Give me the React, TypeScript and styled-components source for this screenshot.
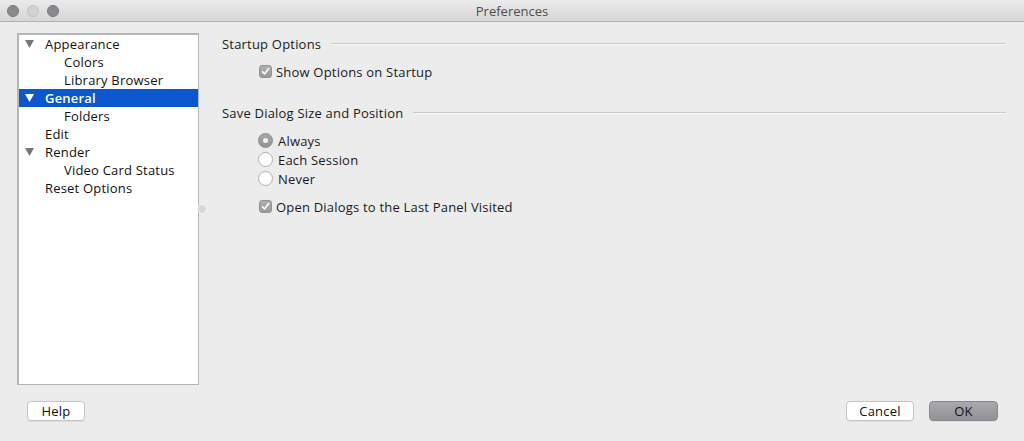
import React from "react";
import styled, { createGlobalStyle } from "styled-components";

const Global = createGlobalStyle`
  html, body { margin: 0; padding: 0; background: #ececec; }
  body { font-family: "Open Sans", "Liberation Sans", sans-serif; }
`;

const Window = styled.div`
  width: 1024px;
  height: 441px;
  background: #ececec;
  display: flex;
  flex-direction: column;
  overflow: hidden;
  font-size: 13px;
  letter-spacing: 0.2px;
  color: #1a1a1a;
`;

const TitleBar = styled.div`
  height: 21px;
  flex: none;
  border-bottom: 1px solid #b3b3b3;
  background: linear-gradient(#ebebeb, #d5d5d5);
  display: flex;
  align-items: center;
  position: relative;
`;

const Lights = styled.div`
  display: flex;
  gap: 8px;
  padding-left: 7px;
`;

const Light = styled.span<{ $dim?: boolean }>`
  width: 12px;
  height: 12px;
  border-radius: 50%;
  box-sizing: border-box;
  background: ${(p) => (p.$dim ? "#d2d2d2" : "#8b8b8f")};
  border: 1px solid ${(p) => (p.$dim ? "#c2c2c2" : "#77777b")};
`;

const Title = styled.div`
  position: absolute;
  left: 0;
  right: 0;
  text-align: center;
  color: #4d4d4d;
  font-size: 13px;
  letter-spacing: 0;
  pointer-events: none;
`;

const Body = styled.div`
  flex: none;
  display: flex;
  padding: 11px 18px 0 17px;
`;

const TreeBox = styled.div`
  width: 182px;
  height: 352px;
  box-sizing: border-box;
  background: #fff;
  border: 1px solid #b5b5b5;
  border-left-width: 2px;
  border-top-width: 2px;
  flex: none;
`;

const Row = styled.div<{ $level: number; $selected?: boolean }>`
  height: 18px;
  display: flex;
  align-items: center;
  padding-left: ${(p) => (p.$level === 0 ? 6 : 45)}px;
  background: ${(p) => (p.$selected ? "#0b57d0" : "transparent")};
  color: ${(p) => (p.$selected ? "#fff" : "#111")};
  font-weight: ${(p) => (p.$selected ? 600 : 400)};
  white-space: nowrap;
`;

const Twisty = styled.span`
  width: 20px;
  display: flex;
  align-items: center;
`;

const Splitter = styled.div`
  width: 23px;
  flex: none;
  display: flex;
  align-items: center;
  justify-content: center;
`;

const Dot = styled.span`
  width: 8px;
  height: 8px;
  border-radius: 50%;
  background: #d8d8d8;
  border: 1px solid #f6f6f6;
  margin-left: -17px;
`;

const Panel = styled.div`
  flex: 1;
  display: flex;
  flex-direction: column;
  padding-top: 2px;
`;

const Section = styled.div`
  display: flex;
  align-items: center;
  height: 18px;
  gap: 10px;
`;

const Rule = styled.div`
  flex: 1;
  height: 1px;
  background: #c8c8c8;
  border-bottom: 1px solid #f8f8f8;
  margin-top: -1px;
`;

const Options = styled.div<{ $top: number; $bottom?: number }>`
  display: flex;
  flex-direction: column;
  padding-left: 36px;
  margin-top: ${(p) => p.$top}px;
  margin-bottom: ${(p) => p.$bottom ?? 0}px;
`;

const OptRow = styled.label<{ $h?: number; $end?: boolean }>`
  display: flex;
  align-items: ${(p) => (p.$end ? "flex-end" : "center")};
  height: ${(p) => p.$h ?? 19}px;
  gap: 4px;
`;

const CheckBox = styled.span`
  width: 13px;
  height: 13px;
  margin-left: 1px;
  border-radius: 3px;
  box-sizing: border-box;
  background: linear-gradient(#b0b0b0, #9a9a9a);
  border: 1px solid #929292;
  display: flex;
  align-items: center;
  justify-content: center;
  margin-bottom: ${"3px"};
`;

const Radio = styled.span<{ $on?: boolean }>`
  width: 15px;
  height: 15px;
  border-radius: 50%;
  box-sizing: border-box;
  background: ${(p) => (p.$on ? "linear-gradient(#a8a8a8, #939393)" : "#fff")};
  border: 1px solid ${(p) => (p.$on ? "#8a8a8a" : "#b0b0b0")};
  display: flex;
  align-items: center;
  justify-content: center;
  margin-right: 1px;
`;

const RadioDot = styled.span`
  width: 5px;
  height: 5px;
  border-radius: 50%;
  background: #f2f2f2;
`;

const Footer = styled.div`
  flex: 1;
  display: flex;
  align-items: flex-start;
  padding: 16px 26px 0 27px;
  box-sizing: border-box;
`;

const Spacer = styled.div`
  flex: 1;
`;

const Button = styled.button<{ $default?: boolean; $w: number }>`
  width: ${(p) => p.$w}px;
  height: 20px;
  box-sizing: border-box;
  border-radius: 4px;
  font-family: inherit;
  font-size: 13px;
  letter-spacing: 0.2px;
  color: #111;
  padding: 0;
  line-height: 18px;
  background: ${(p) => (p.$default ? "linear-gradient(#a9a9ad, #929296)" : "#fff")};
  border: 1px solid ${(p) => (p.$default ? "#88888c" : "#c4c4c4")};
  box-shadow: 0 1px 0 rgba(0, 0, 0, 0.06);
  margin-left: ${(p) => (p.$default ? 15 : 0)}px;
`;

const Tri = ({ color }: { color: string }) => (
  <svg width="9" height="8" viewBox="0 0 9 8">
    <polygon points="0,0 9,0 4.5,8" fill={color} />
  </svg>
);

const Check = () => (
  <svg width="9" height="9" viewBox="0 0 9 9">
    <polyline points="1.5,4.8 3.6,7 7.6,1.5" fill="none" stroke="#fff" strokeWidth="1.6" strokeLinecap="round" strokeLinejoin="round" />
  </svg>
);

type Item = { label: string; level: number; open?: boolean; selected?: boolean };

const items: Item[] = [
  { label: "Appearance", level: 0, open: true },
  { label: "Colors", level: 1 },
  { label: "Library Browser", level: 1 },
  { label: "General", level: 0, open: true, selected: true },
  { label: "Folders", level: 1 },
  { label: "Edit", level: 0 },
  { label: "Render", level: 0, open: true },
  { label: "Video Card Status", level: 1 },
  { label: "Reset Options", level: 0 },
];

export default function App() {
  return (
    <Window>
      <Global />
      <TitleBar>
        <Lights>
          <Light />
          <Light $dim />
          <Light />
        </Lights>
        <Title>Preferences</Title>
      </TitleBar>
      <Body>
        <TreeBox>
          {items.map((it) => (
            <Row key={it.label} $level={it.level} $selected={it.selected}>
              {it.level === 0 && (
                <Twisty>{it.open && <Tri color={it.selected ? "#fff" : "#777"} />}</Twisty>
              )}
              {it.label}
            </Row>
          ))}
        </TreeBox>
        <Splitter>
          <Dot />
        </Splitter>
        <Panel>
          <Section>
            Startup Options
            <Rule />
          </Section>
          <Options $top={9} $bottom={23}>
            <OptRow>
              <CheckBox style={{ marginBottom: 0 }}>
                <Check />
              </CheckBox>
              Show Options on Startup
            </OptRow>
          </Options>
          <Section>
            Save Dialog Size and Position
            <Rule />
          </Section>
          <Options $top={9}>
            <OptRow>
              <Radio $on>
                <RadioDot />
              </Radio>
              Always
            </OptRow>
            <OptRow>
              <Radio />
              Each Session
            </OptRow>
            <OptRow>
              <Radio />
              Never
            </OptRow>
            <OptRow $h={28} $end>
              <CheckBox>
                <Check />
              </CheckBox>
              Open Dialogs to the Last Panel Visited
            </OptRow>
          </Options>
        </Panel>
      </Body>
      <Footer>
        <Button $w={58}>Help</Button>
        <Spacer />
        <Button $w={68}>Cancel</Button>
        <Button $w={69} $default>
          OK
        </Button>
      </Footer>
    </Window>
  );
}
